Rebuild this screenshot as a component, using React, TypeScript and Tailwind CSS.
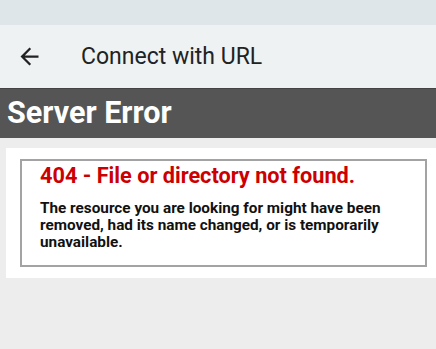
export default function App() {
  return (
    <div className="w-[436px] h-[349px] bg-[#ededed] font-['Roboto',sans-serif] overflow-hidden">
      <div className="h-[25px] bg-[#dfe6e9]" />
      <div className="h-[64px] bg-[#eef2f3] flex items-center border-b border-[#444]">
        <svg viewBox="0 0 24 24" className="ml-[16px] w-[27px] h-[27px] text-[#222]" fill="currentColor">
          <path d="M20 11H7.83l5.59-5.59L12 4l-8 8 8 8 1.41-1.41L7.83 13H20v-2z" />
        </svg>
        <span className="ml-[38px] text-[23px] text-[#222] leading-none">Connect with URL</span>
      </div>
      <div className="h-[49px] bg-[#555555] flex items-center pl-[7px]">
        <h1 className="text-white text-[30.5px] font-bold leading-none">Server Error</h1>
      </div>
      <div className="mt-[10px] ml-[6px] bg-white pt-[11px] pb-[11px] pl-[14px] pr-[9px]">
        <div className="border-2 border-[#a3a3a3] pl-[18px] pr-4 pt-[1px] pb-[14px]">
          <h2 className="text-[#cc0000] text-[21.7px] font-bold leading-[28px]">404 - File or directory not found.</h2>
          <p className="mt-[10px] text-[15.3px] font-bold leading-[17px] text-[#111]">
            The resource you are looking for might have been removed, had its name changed, or is temporarily unavailable.
          </p>
        </div>
      </div>
    </div>
  );
}
